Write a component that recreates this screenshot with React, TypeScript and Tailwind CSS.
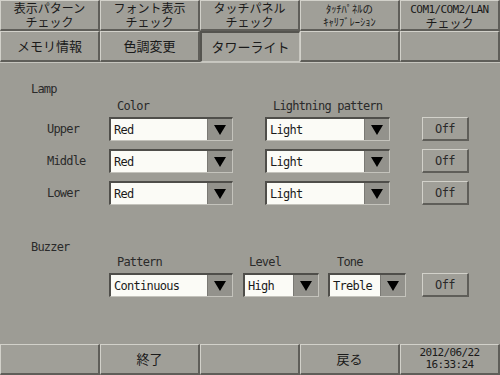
import React from "react";

const JP = { fontFamily: '"Noto Sans CJK JP", "Noto Sans", sans-serif' };
const MONO = { fontFamily: '"DejaVu Sans Mono", "Liberation Mono", monospace' };

const raised =
  "border-t border-l border-t-[#d2d1ca] border-l-[#d2d1ca] border-b-2 border-r-2 border-b-[#5f5e59] border-r-[#5f5e59] bg-[#a09f98]";
const pressed =
  "border-t-2 border-l-2 border-t-[#55544f] border-l-[#55544f] border-b border-r border-b-[#c9c8c1] border-r-[#c9c8c1] bg-[#a3a29b]";

function NavBtn({ children, sel = false }: { children?: React.ReactNode; sel?: boolean }) {
  return (
    <div
      className={`${sel ? pressed : raised} h-full flex flex-col items-center justify-center text-center text-[#1a1a1a]`}
    >
      {children}
    </div>
  );
}

function Dropdown({ w, value }: { w: string; value: string }) {
  return (
    <div
      className={`${w} h-[24px] flex border-t-2 border-l-2 border-t-[#4f4e4a] border-l-[#4f4e4a] border-b border-r border-b-[#c4c3bc] border-r-[#c4c3bc]`}
    >
      <div
        className="flex-1 bg-[#fbfbf6] flex items-center pl-[3px] text-[12px] tracking-[-0.7px] text-[#1a1a1a]"
        style={MONO}
      >
        {value}
      </div>
      <div className="w-[25px] bg-[#93928c] flex items-center justify-center border-l border-l-[#7a7974]">
        <svg width="12" height="10" viewBox="0 0 12 10">
          <polygon points="0,0 12,0 6,10" fill="#000" />
        </svg>
      </div>
    </div>
  );
}

function OffBtn() {
  return (
    <div
      className={`w-[47px] h-[24px] ${raised} flex items-center justify-center text-[12px] tracking-[-0.6px] text-[#2a2a2a]`}
      style={MONO}
    >
      Off
    </div>
  );
}

function LampRow({ label }: { label: string }) {
  return (
    <div className="flex items-center h-[24px]">
      <div className="w-[47px]" />
      <div className="w-[62px] text-[12px] tracking-[-0.8px] text-[#2a2a2a]" style={MONO}>
        {label}
      </div>
      <Dropdown w="w-[124px]" value="Red" />
      <div className="w-[32px]" />
      <Dropdown w="w-[125px]" value="Light" />
      <div className="w-[32px]" />
      <OffBtn />
    </div>
  );
}

export default function App() {
  const lbl = "text-[12px] tracking-[-0.8px] text-[#2a2a2a] leading-[14px]";
  return (
    <div className="w-[500px] h-[375px] bg-[#9d9c95] flex flex-col overflow-hidden select-none">
      {/* top tab row */}
      <div className="grid grid-cols-5 h-[31px]" style={JP}>
        <NavBtn>
          <p className="text-[12px] leading-[14px]">
            表示パターン
            <br />
            チェック
          </p>
        </NavBtn>
        <NavBtn>
          <p className="text-[12px] leading-[14px]">
            フォント表示
            <br />
            チェック
          </p>
        </NavBtn>
        <NavBtn>
          <p className="text-[12px] leading-[14px]">
            タッチパネル
            <br />
            チェック
          </p>
        </NavBtn>
        <NavBtn>
          <p className="text-[10.5px] leading-[13px]">
            ﾀｯﾁﾊﾟﾈﾙの
            <br />
            ｷｬﾘﾌﾞﾚｰｼｮﾝ
          </p>
        </NavBtn>
        <NavBtn>
          <p className="text-[12px] leading-[13px]">
            <span className="text-[11px] tracking-[-0.6px]" style={MONO}>
              COM1/COM2/LAN
            </span>
            <br />
            チェック
          </p>
        </NavBtn>
      </div>
      {/* second tab row */}
      <div className="grid grid-cols-5 h-[31px]" style={JP}>
        <NavBtn>
          <span className="text-[13px]">メモリ情報</span>
        </NavBtn>
        <NavBtn>
          <span className="text-[13px]">色調変更</span>
        </NavBtn>
        <NavBtn sel>
          <span className="text-[13px]">タワーライト</span>
        </NavBtn>
        <NavBtn />
        <NavBtn />
      </div>

      {/* main panel */}
      <div className="flex-1 flex flex-col border-t border-t-[#c6c5be]" style={MONO}>
        <div className={`${lbl} ml-[31px] mt-[19px]`}>Lamp</div>
        <div className={`flex ${lbl} mt-[3px]`}>
          <div className="w-[117px]" />
          <div className="w-[156px]">Color</div>
          <div>Lightning pattern</div>
        </div>
        <div className="flex flex-col gap-[8px] mt-[4px]">
          <LampRow label="Upper" />
          <LampRow label="Middle" />
          <LampRow label="Lower" />
        </div>

        <div className={`${lbl} ml-[31px] mt-[35px]`}>Buzzer</div>
        <div className={`flex ${lbl} mt-[1px]`}>
          <div className="w-[117px]" />
          <div className="w-[132px]">Pattern</div>
          <div className="w-[88px]">Level</div>
          <div>Tone</div>
        </div>
        <div className="flex items-center mt-[4px]">
          <div className="w-[109px]" />
          <Dropdown w="w-[124px]" value="Continuous" />
          <div className="w-[10px]" />
          <Dropdown w="w-[76px]" value="High" />
          <div className="w-[9px]" />
          <Dropdown w="w-[78px]" value="Treble" />
          <div className="w-[16px]" />
          <OffBtn />
        </div>
      </div>

      {/* bottom bar */}
      <div className="grid grid-cols-5 h-[31px]" style={JP}>
        <NavBtn />
        <NavBtn>
          <span className="text-[13px]">終了</span>
        </NavBtn>
        <NavBtn />
        <NavBtn>
          <span className="text-[13px]">戻る</span>
        </NavBtn>
        <NavBtn>
          <p className="text-[11px] leading-[12px] tracking-[-0.6px]" style={MONO}>
            2012/06/22
            <br />
            16:33:24
          </p>
        </NavBtn>
      </div>
    </div>
  );
}
